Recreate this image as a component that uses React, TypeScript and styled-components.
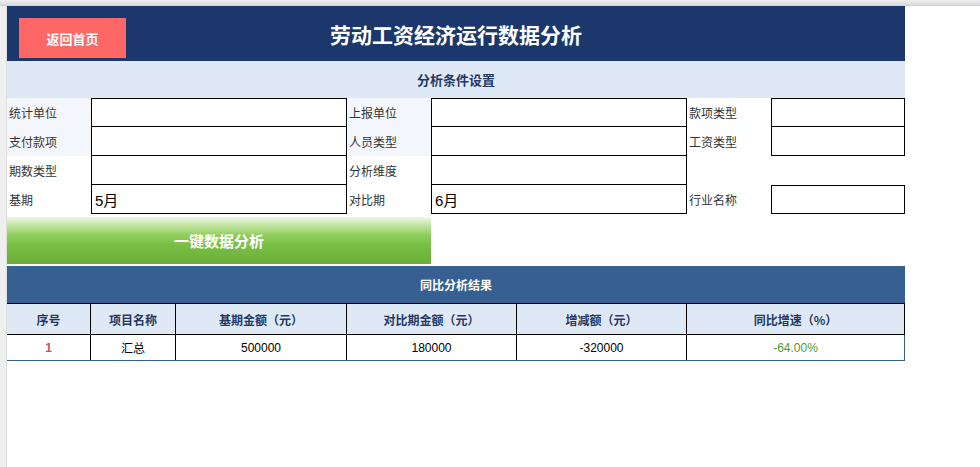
import styled, { createGlobalStyle } from "styled-components";

const GlobalStyle = createGlobalStyle`
  html, body {
    margin: 0;
    padding: 0;
    background: #ffffff;
  }
  body {
    font-family: "Liberation Sans", "Noto Sans CJK SC", sans-serif;
    color: #333333;
  }
`;

type Field = { label: string; value?: string; shaded?: boolean } | null;

const formRows: Field[][] = [
  [
    { label: "统计单位", shaded: true },
    { label: "上报单位", shaded: true },
    { label: "款项类型" },
  ],
  [
    { label: "支付款项", shaded: true },
    { label: "人员类型", shaded: true },
    { label: "工资类型" },
  ],
  [{ label: "期数类型" }, { label: "分析维度" }, null],
  [
    { label: "基期", value: "5月" },
    { label: "对比期", value: "6月" },
    { label: "行业名称" },
  ],
];

const columns = [
  "序号",
  "项目名称",
  "基期金额（元）",
  "对比期金额（元）",
  "增减额（元）",
  "同比增速（%）",
];

const App = (): JSX.Element => {
  return (
    <>
      <GlobalStyle />
      <Page>
        <TopStrip />
        <Body>
          <Gutter />
          <Main>
            <Header>
              <BackButton>返回首页</BackButton>
              <Title>劳动工资经济运行数据分析</Title>
              <span />
            </Header>
            <SubHeader>分析条件设置</SubHeader>
            <FormGrid>
              {formRows.map((row, r) =>
                row.map((field, c) =>
                  field ? (
                    <FieldPair key={`${r}-${c}`}>
                      <Label $shaded={field.shaded}>{field.label}</Label>
                      <InputCell
                        $top={r === 0 || formRows[r - 1][c] === null}
                      >
                        {field.value}
                      </InputCell>
                    </FieldPair>
                  ) : (
                    <FieldPair key={`${r}-${c}`} />
                  )
                )
              )}
            </FormGrid>
            <ActionRow>
              <AnalyzeButton>一键数据分析</AnalyzeButton>
            </ActionRow>
            <ResultTitle>同比分析结果</ResultTitle>
            <HeadRow>
              {columns.map((c) => (
                <HeadCell key={c}>{c}</HeadCell>
              ))}
            </HeadRow>
            <DataRow>
              <DataCell $tone="index">1</DataCell>
              <DataCell>汇总</DataCell>
              <DataCell>500000</DataCell>
              <DataCell>180000</DataCell>
              <DataCell>-320000</DataCell>
              <DataCell $tone="rate">-64.00%</DataCell>
            </DataRow>
          </Main>
        </Body>
      </Page>
    </>
  );
};

const Page = styled.div`
  min-height: 100vh;
  display: flex;
  flex-direction: column;
`;

const TopStrip = styled.div`
  height: 6px;
  flex-shrink: 0;
  background: linear-gradient(#eeeef1, #dcdce0);
  border-bottom: 1px solid #d2d2d6;
  box-sizing: border-box;
`;

const Body = styled.div`
  flex: 1;
  display: flex;
`;

const Gutter = styled.div`
  width: 7px;
  flex-shrink: 0;
  background: #efefef;
  border-right: 1px solid #e0e0e0;
  box-sizing: border-box;
`;

const Main = styled.div`
  width: 898px;
  display: flex;
  flex-direction: column;
`;

const Header = styled.div`
  height: 55px;
  background: #1b376b;
  display: grid;
  grid-template-columns: 1fr auto 1fr;
  align-items: center;
  padding-left: 12px;
  box-sizing: border-box;
`;

const BackButton = styled.button`
  justify-self: start;
  width: 107px;
  height: 40px;
  margin-top: 9px;
  border: none;
  background: #ff6666;
  color: #ffffff;
  font-family: "Noto Sans CJK SC", sans-serif;
  font-size: 13px;
  font-weight: 700;
  cursor: pointer;
  padding: 0;
`;

const Title = styled.h1`
  margin: 0 0 0 -12px;
  color: #ffffff;
  font-family: "Noto Sans CJK SC", sans-serif;
  font-size: 21px;
  font-weight: 700;
`;

const SubHeader = styled.div`
  height: 37px;
  background: #dfe9f5;
  display: flex;
  align-items: center;
  justify-content: center;
  color: #1f3864;
  font-family: "Noto Sans CJK SC", sans-serif;
  font-size: 13px;
  font-weight: 700;
`;

const FormGrid = styled.div`
  display: grid;
  grid-template-columns: 340px 340px 218px;
  grid-auto-rows: 29px;
`;

const FieldPair = styled.div`
  display: grid;
  grid-template-columns: 84px 1fr;
`;

const Label = styled.div<{ $shaded?: boolean }>`
  background: ${(p) => (p.$shaded ? "#f3f7fc" : "#ffffff")};
  display: flex;
  align-items: center;
  padding-left: 2px;
  font-family: "Noto Sans CJK SC", sans-serif;
  font-size: 12px;
  color: #333333;
`;

const InputCell = styled.div<{ $top?: boolean }>`
  box-sizing: border-box;
  border: 1px solid #000000;
  border-top: ${(p) => (p.$top ? "1px solid #000000" : "none")};
  background: #ffffff;
  display: flex;
  align-items: center;
  padding-left: 3px;
  font-size: 15px;
  color: #000000;
`;

const ActionRow = styled.div`
  padding-top: 3px;
  display: flex;
`;

const AnalyzeButton = styled.button`
  width: 424px;
  height: 47px;
  border: none;
  padding: 0;
  background: linear-gradient(
    #eef8e6 0%,
    #c8e7ac 15%,
    #92ce60 38%,
    #78c044 60%,
    #6aad3b 100%
  );
  color: #ffffff;
  font-family: "Noto Sans CJK SC", sans-serif;
  font-size: 15px;
  font-weight: 700;
  cursor: pointer;
`;

const ResultTitle = styled.div`
  margin-top: 2px;
  height: 37px;
  background: #366092;
  display: flex;
  align-items: center;
  justify-content: center;
  color: #ffffff;
  font-family: "Noto Sans CJK SC", sans-serif;
  font-size: 12px;
  font-weight: 700;
`;

const TableRow = styled.div`
  display: grid;
  grid-template-columns: 84px 85px 171px 170px 170px 218px;
  box-sizing: border-box;
`;

const HeadRow = styled(TableRow)`
  height: 32px;
  background: #dfe9f5;
  border-top: 1px solid #000000;
  border-bottom: 1px solid #000000;
`;

const DataRow = styled(TableRow)`
  height: 26px;
  border-bottom: 1px solid #366092;
`;

const Cell = styled.div`
  box-sizing: border-box;
  display: flex;
  align-items: center;
  justify-content: center;
  border-right: 1px solid #000000;
  font-size: 12px;
`;

const HeadCell = styled(Cell)`
  color: #1f3864;
  font-family: "Noto Sans CJK SC", sans-serif;
  font-weight: 700;
`;

const DataCell = styled(Cell)<{ $tone?: "index" | "rate" }>`
  font-weight: ${(p) => (p.$tone === "index" ? 700 : 400)};
  color: ${(p) =>
    p.$tone === "index" ? "#c8505a" : p.$tone === "rate" ? "#4a9e2f" : "#000000"};

  &:last-child {
    border-right-color: #366092;
  }
`;

export default App;
